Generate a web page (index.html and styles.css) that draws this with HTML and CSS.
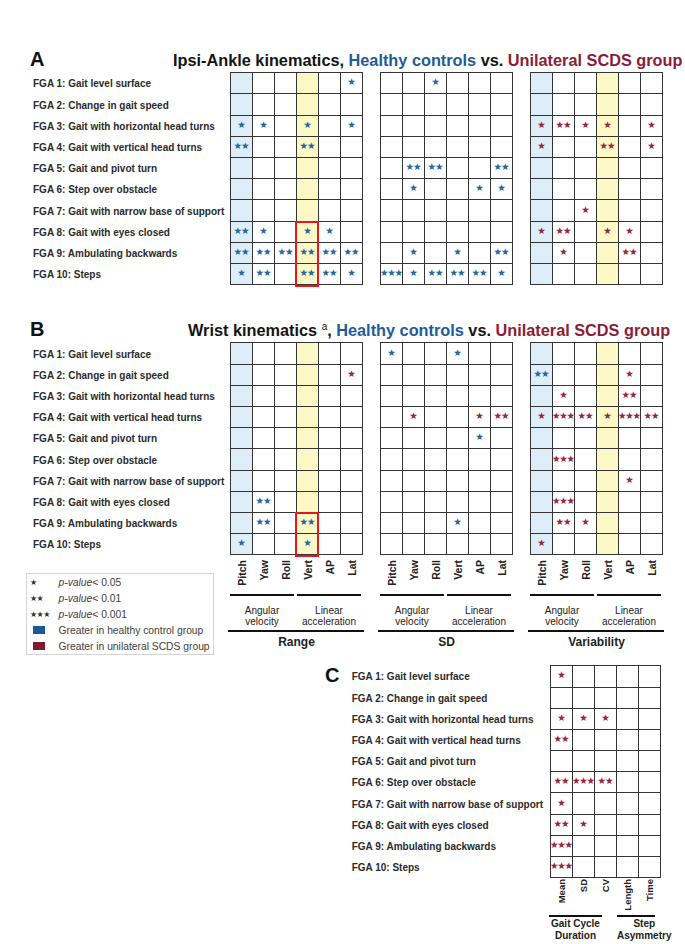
FILE: index.html
```html
<!DOCTYPE html>
<html lang="en">
<head>
<meta charset="utf-8">
<title>FGA kinematics comparison</title>
<link rel="stylesheet" href="styles.css">
</head>
<body>
<section class="panel panel-a">
  <div class="head">
    <span class="letter la">A</span>
    <h2 class="title">Ipsi-Ankle kinematics, <span class="hc">Healthy controls</span> vs. <span class="us">Unilateral SCDS group</span></h2>
  </div>
  <div class="body">
    <div class="labels">
      <div>FGA 1: Gait level surface</div>
      <div>FGA 2: Change in gait speed</div>
      <div>FGA 3: Gait with horizontal head turns</div>
      <div>FGA 4: Gait with vertical head turns</div>
      <div>FGA 5: Gait and pivot turn</div>
      <div>FGA 6: Step over obstacle</div>
      <div>FGA 7: Gait with narrow base of support</div>
      <div>FGA 8: Gait with eyes closed</div>
      <div>FGA 9: Ambulating backwards</div>
      <div>FGA 10: Steps</div>
    </div>
    <div class="blocks">
      <div class="grid sh">
        <i></i><i></i><i></i><i></i><i></i><i class="bl">★</i>
        <i></i><i></i><i></i><i></i><i></i><i></i>
        <i class="bl">★</i><i class="bl">★</i><i></i><i class="bl">★</i><i></i><i class="bl">★</i>
        <i class="bl">★★</i><i></i><i></i><i class="bl">★★</i><i></i><i></i>
        <i></i><i></i><i></i><i></i><i></i><i></i>
        <i></i><i></i><i></i><i></i><i></i><i></i>
        <i></i><i></i><i></i><i></i><i></i><i></i>
        <i class="bl">★★</i><i class="bl">★</i><i></i><i class="bl">★</i><i class="bl">★</i><i></i>
        <i class="bl">★★</i><i class="bl">★★</i><i class="bl">★★</i><i class="bl">★★</i><i class="bl">★★</i><i class="bl">★★</i>
        <i class="bl">★</i><i class="bl">★★</i><i></i><i class="bl">★★</i><i class="bl">★★</i><i class="bl">★</i>
        <b class="redbox r8"></b>
      </div>
      <div class="grid">
        <i></i><i></i><i class="bl">★</i><i></i><i></i><i></i>
        <i></i><i></i><i></i><i></i><i></i><i></i>
        <i></i><i></i><i></i><i></i><i></i><i></i>
        <i></i><i></i><i></i><i></i><i></i><i></i>
        <i></i><i class="bl">★★</i><i class="bl">★★</i><i></i><i></i><i class="bl">★★</i>
        <i></i><i class="bl">★</i><i></i><i></i><i class="bl">★</i><i class="bl">★</i>
        <i></i><i></i><i></i><i></i><i></i><i></i>
        <i></i><i></i><i></i><i></i><i></i><i></i>
        <i></i><i class="bl">★</i><i></i><i class="bl">★</i><i></i><i class="bl">★★</i>
        <i class="bl">★★★</i><i class="bl">★</i><i class="bl">★★</i><i class="bl">★★</i><i class="bl">★★</i><i class="bl">★</i>
      </div>
      <div class="grid sh">
        <i></i><i></i><i></i><i></i><i></i><i></i>
        <i></i><i></i><i></i><i></i><i></i><i></i>
        <i class="rd">★</i><i class="rd">★★</i><i class="rd">★</i><i class="rd">★</i><i></i><i class="rd">★</i>
        <i class="rd">★</i><i></i><i></i><i class="rd">★★</i><i></i><i class="rd">★</i>
        <i></i><i></i><i></i><i></i><i></i><i></i>
        <i></i><i></i><i></i><i></i><i></i><i></i>
        <i></i><i></i><i class="rd">★</i><i></i><i></i><i></i>
        <i class="rd">★</i><i class="rd">★★</i><i></i><i class="rd">★</i><i class="rd">★</i><i></i>
        <i></i><i class="rd">★</i><i></i><i></i><i class="rd">★★</i><i></i>
        <i></i><i></i><i></i><i></i><i></i><i></i>
      </div>
    </div>
  </div>
</section>

<section class="panel panel-b">
  <div class="head">
    <span class="letter lb">B</span>
    <h2 class="title">Wrist kinematics <sup>a</sup>, <span class="hc">Healthy controls</span> vs. <span class="us">Unilateral SCDS group</span></h2>
  </div>
  <div class="body">
    <div class="side">
      <div class="labels">
        <div>FGA 1: Gait level surface</div>
        <div>FGA 2: Change in gait speed</div>
        <div>FGA 3: Gait with horizontal head turns</div>
        <div>FGA 4: Gait with vertical head turns</div>
        <div>FGA 5: Gait and pivot turn</div>
        <div>FGA 6: Step over obstacle</div>
        <div>FGA 7: Gait with narrow base of support</div>
        <div>FGA 8: Gait with eyes closed</div>
        <div>FGA 9: Ambulating backwards</div>
        <div>FGA 10: Steps</div>
      </div>
      <div class="legend">
        <div class="lrow"><span class="k st">★</span><span><em>p-value</em>&lt; 0.05</span></div>
        <div class="lrow"><span class="k st">★★</span><span><em>p-value</em>&lt; 0.01</span></div>
        <div class="lrow"><span class="k st">★★★</span><span><em>p-value</em>&lt; 0.001</span></div>
        <div class="lrow"><span class="k"><span class="sq sq-b"></span></span><span>Greater in healthy control group</span></div>
        <div class="lrow"><span class="k"><span class="sq sq-r"></span></span><span>Greater in unilateral SCDS group</span></div>
      </div>
    </div>
    <div class="blocks">
      <div class="block">
        <div class="grid sh">
          <i></i><i></i><i></i><i></i><i></i><i></i>
          <i></i><i></i><i></i><i></i><i></i><i class="rd">★</i>
          <i></i><i></i><i></i><i></i><i></i><i></i>
          <i></i><i></i><i></i><i></i><i></i><i></i>
          <i></i><i></i><i></i><i></i><i></i><i></i>
          <i></i><i></i><i></i><i></i><i></i><i></i>
          <i></i><i></i><i></i><i></i><i></i><i></i>
          <i></i><i class="bl">★★</i><i></i><i></i><i></i><i></i>
          <i></i><i class="bl">★★</i><i></i><i class="bl">★★</i><i></i><i></i>
          <i class="bl">★</i><i></i><i></i><i class="bl">★</i><i></i><i></i>
          <b class="redbox r9"></b>
        </div>
        <div class="axis"><span>Pitch</span><span>Yaw</span><span>Roll</span><span>Vert</span><span>AP</span><span>Lat</span></div>
        <div class="brk"><span></span><span></span></div>
        <div class="sub"><div>Angular<br>velocity</div><div>Linear<br>acceleration</div></div>
        <div class="full"></div>
        <div class="cap">Range</div>
      </div>
      <div class="block">
        <div class="grid">
          <i class="bl">★</i><i></i><i></i><i class="bl">★</i><i></i><i></i>
          <i></i><i></i><i></i><i></i><i></i><i></i>
          <i></i><i></i><i></i><i></i><i></i><i></i>
          <i></i><i class="rd">★</i><i></i><i></i><i class="rd">★</i><i class="rd">★★</i>
          <i></i><i></i><i></i><i></i><i class="bl">★</i><i></i>
          <i></i><i></i><i></i><i></i><i></i><i></i>
          <i></i><i></i><i></i><i></i><i></i><i></i>
          <i></i><i></i><i></i><i></i><i></i><i></i>
          <i></i><i></i><i></i><i class="bl">★</i><i></i><i></i>
          <i></i><i></i><i></i><i></i><i></i><i></i>
        </div>
        <div class="axis"><span>Pitch</span><span>Yaw</span><span>Roll</span><span>Vert</span><span>AP</span><span>Lat</span></div>
        <div class="brk"><span></span><span></span></div>
        <div class="sub"><div>Angular<br>velocity</div><div>Linear<br>acceleration</div></div>
        <div class="full"></div>
        <div class="cap">SD</div>
      </div>
      <div class="block">
        <div class="grid sh">
          <i></i><i></i><i></i><i></i><i></i><i></i>
          <i class="bl">★★</i><i></i><i></i><i></i><i class="rd">★</i><i></i>
          <i></i><i class="rd">★</i><i></i><i></i><i class="rd">★★</i><i></i>
          <i class="rd">★</i><i class="rd">★★★</i><i class="rd">★★</i><i class="rd">★</i><i class="rd">★★★</i><i class="rd">★★</i>
          <i></i><i></i><i></i><i></i><i></i><i></i>
          <i></i><i class="rd">★★★</i><i></i><i></i><i></i><i></i>
          <i></i><i></i><i></i><i></i><i class="rd">★</i><i></i>
          <i></i><i class="rd">★★★</i><i></i><i></i><i></i><i></i>
          <i></i><i class="rd">★★</i><i class="rd">★</i><i></i><i></i><i></i>
          <i class="rd">★</i><i></i><i></i><i></i><i></i><i></i>
        </div>
        <div class="axis"><span>Pitch</span><span>Yaw</span><span>Roll</span><span>Vert</span><span>AP</span><span>Lat</span></div>
        <div class="brk"><span></span><span></span></div>
        <div class="sub"><div>Angular<br>velocity</div><div>Linear<br>acceleration</div></div>
        <div class="full"></div>
        <div class="cap">Variability</div>
      </div>
    </div>
  </div>
</section>

<section class="panel panel-c">
  <span class="letter lc">C</span>
  <div class="labels">
    <div>FGA 1: Gait level surface</div>
    <div>FGA 2: Change in gait speed</div>
    <div>FGA 3: Gait with horizontal head turns</div>
    <div>FGA 4: Gait with vertical head turns</div>
    <div>FGA 5: Gait and pivot turn</div>
    <div>FGA 6: Step over obstacle</div>
    <div>FGA 7: Gait with narrow base of support</div>
    <div>FGA 8: Gait with eyes closed</div>
    <div>FGA 9: Ambulating backwards</div>
    <div>FGA 10: Steps</div>
  </div>
  <div class="block">
    <div class="grid g5">
      <i class="rd">★</i><i></i><i></i><i></i><i></i>
      <i></i><i></i><i></i><i></i><i></i>
      <i class="rd">★</i><i class="rd">★</i><i class="rd">★</i><i></i><i></i>
      <i class="rd">★★</i><i></i><i></i><i></i><i></i>
      <i></i><i></i><i></i><i></i><i></i>
      <i class="rd">★★</i><i class="rd">★★★</i><i class="rd">★★</i><i></i><i></i>
      <i class="rd">★</i><i></i><i></i><i></i><i></i>
      <i class="rd">★★</i><i class="rd">★</i><i></i><i></i><i></i>
      <i class="rd">★★★</i><i></i><i></i><i></i><i></i>
      <i class="rd">★★★</i><i></i><i></i><i></i><i></i>
    </div>
    <div class="axis a5"><span>Mean</span><span>SD</span><span>CV</span><span>Length</span><span>Time</span></div>
    <div class="brk b5"><span></span><span></span></div>
    <div class="sub s5"><div>Gait Cycle<br>Duration</div><div>Step<br>Asymmetry</div></div>
  </div>
</section>
</body>
</html>
```

FILE: styles.css
```css
* { box-sizing: border-box; }

body {
  margin: 0;
  width: 685px;
  background: #ffffff;
  font-family: "Liberation Sans", Arial, sans-serif;
  color: #262626;
}

.panel-a { padding-top: 47px; }
.panel-b { margin-top: 32px; }

.head {
  display: flex;
  align-items: baseline;
  height: 24px;
  line-height: 24px;
  margin-bottom: 1.3px;
}

.letter {
  flex: none;
  font-size: 20px;
  font-weight: 700;
  color: #111;
}
.head .letter { padding-left: 30px; }
.la { width: 173px; }
.lb { width: 188px; }

.title {
  margin: 0;
  font-size: 16.3px;
  font-weight: 700;
  color: #141414;
  white-space: nowrap;
}
.title sup { font-size: 10px; font-weight: 400; vertical-align: 6px; line-height: 0; }
.hc { color: #1f5c97; }
.us { color: #8b1d36; }

.body {
  display: flex;
  align-items: flex-start;
  padding-left: 33px;
}

.side { flex: 0 0 197px; }

.labels {
  flex: 0 0 197px;
  display: grid;
  grid-template-rows: repeat(10, 21.2px);
  padding-top: 1px;
  font-size: 10px;
  font-weight: 700;
  color: #2b2b2b;
  white-space: nowrap;
}
.labels div { display: flex; align-items: center; }

.blocks { display: flex; gap: 17px; }
.block { display: flex; flex-direction: column; width: 133px; }

.grid {
  position: relative;
  display: grid;
  grid-template-columns: repeat(6, 22px);
  grid-template-rows: repeat(10, 21.2px);
  width: 133px;
  border-top: 1px solid #353535;
  border-left: 1px solid #353535;
}
.grid > i {
  display: flex;
  align-items: center;
  justify-content: center;
  padding-bottom: 3px;
  border-right: 1px solid #353535;
  border-bottom: 1px solid #353535;
  font-style: normal;
  font-family: "DejaVu Sans", sans-serif;
  font-size: 9.5px;
  letter-spacing: -1.2px;
  text-indent: -1.2px;
  white-space: nowrap;
}
.grid.sh > i:nth-child(6n+1) { background: #ddeef8; }
.grid.sh > i:nth-child(6n+4) { background: #fcf9c6; }
.grid.g5 { grid-template-columns: repeat(5, 22px); width: 111px; }

.bl { color: #2566a0; }
.rd { color: #972640; }

.redbox {
  position: absolute;
  grid-column: 4 / 5;
  top: -1px;
  left: -2px;
  right: 0;
  bottom: -1.5px;
  border: 2.5px solid #e5161c;
}
.redbox.r8 { grid-row: 8 / 11; }
.redbox.r9 { grid-row: 9 / 11; }

.axis {
  display: grid;
  grid-template-columns: repeat(6, 22px);
  padding-left: 1px;
  height: 33.5px;
  margin-top: 5px;
}
.axis span {
  align-self: start;
  justify-self: center;
  writing-mode: vertical-rl;
  transform: rotate(180deg);
  font-size: 10.5px;
  font-weight: 700;
  line-height: 11px;
  color: #222;
}

.brk { display: flex; gap: 3px; }
.brk span { flex: 0 0 64px; height: 2px; background: #111; }

.sub {
  display: flex;
  gap: 3px;
  margin-top: 9px;
  font-size: 10px;
  line-height: 11px;
  color: #222;
}
.sub div {
  flex: 0 0 64px;
  display: flex;
  flex-direction: column;
  align-items: center;
  text-align: center;
  white-space: nowrap;
}

.full { height: 2px; margin: 3px -1px 0 -2px; background: #111; }

.cap {
  margin-top: 3px;
  font-size: 12px;
  font-weight: 700;
  line-height: 14px;
  text-align: center;
  color: #1e1e1e;
}

.legend {
  width: 188px;
  margin: 18px 0 0 -7px;
  border: 1.5px solid #d4d4d4;
  font-size: 10.3px;
  color: #404040;
}
.lrow { display: flex; align-items: center; height: 16px; white-space: nowrap; }
.k { flex: 0 0 31.5px; padding-left: 3px; display: flex; align-items: center; }
.st { font-family: "DejaVu Sans", sans-serif; font-size: 8px; letter-spacing: -0.6px; color: #333; }
.sq { display: block; width: 12px; height: 8px; margin-left: 3px; }
.sq-b { background: #1c5a95; }
.sq-r { background: #7d1a2c; }
.lrow em { font-style: italic; }

.panel-c {
  display: flex;
  align-items: flex-start;
  margin-top: 10px;
  padding-left: 325px;
}
.lc { width: 26.7px; line-height: 20px; }
.panel-c .labels { flex: 0 0 198.3px; }
.panel-c .block { width: 111px; }

.axis.a5 {
  grid-template-columns: repeat(5, 22px);
  height: 36px;
  margin-top: 1px;
}
.axis.a5 span { font-size: 9.5px; line-height: 10px; }

.brk.b5 { gap: 15px; margin-left: -1px; }
.brk.b5 span:first-child { flex: 0 0 53px; }
.brk.b5 span:last-child { flex: 0 0 38px; }

.sub.s5 {
  gap: 15px;
  margin: 1.2px 0 0 -1px;
  font-weight: 700;
  line-height: 11.7px;
}
.sub.s5 div:first-child { flex: 0 0 53px; }
.sub.s5 div:last-child { flex: 0 0 38px; }
```
